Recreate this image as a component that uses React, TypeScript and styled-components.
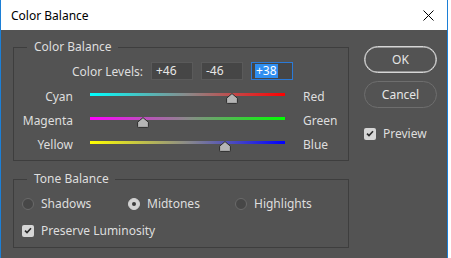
import styled, { createGlobalStyle } from "styled-components";

const GlobalStyle = createGlobalStyle`
  html, body {
    margin: 0;
    padding: 0;
    background: #ffffff;
  }
  body {
    font-family: "Noto Sans", "DejaVu Sans", sans-serif;
    font-size: 12px;
  }
`;

const Window = styled.div`
  width: 448px;
  height: 258px;
  box-sizing: border-box;
  border-left: 1px solid #1c7fd6;
  border-right: 1px solid #1c7fd6;
  background: #535353;
  display: flex;
  flex-direction: column;
`;

const TitleBar = styled.div`
  height: 30px;
  background: #ffffff;
  display: flex;
  align-items: center;
  justify-content: space-between;
  padding: 0 9px 0 10px;
  color: #000000;
  font-size: 12px;
`;

const CloseButton = styled.div`
  width: 12px;
  height: 12px;
  display: flex;
  align-items: center;
  justify-content: center;
  margin-right: 4px;
`;

const Body = styled.div`
  display: flex;
  align-items: flex-start;
  padding: 17px 0 0 12px;
  color: #dedede;
`;

const LeftColumn = styled.div`
  width: 336px;
  display: flex;
  flex-direction: column;
  gap: 18px;
`;

const RightColumn = styled.div`
  width: 73px;
  margin-left: 15px;
  margin-top: -1px;
  display: flex;
  flex-direction: column;
`;

const Group = styled.div<{ $height: number }>`
  position: relative;
  box-sizing: border-box;
  height: ${(p) => p.$height}px;
  border: 1px solid #3e3e3e;
`;

const Legend = styled.span`
  position: absolute;
  top: -9px;
  left: 13px;
  padding: 0 6px 0 7px;
  background: #535353;
  line-height: 16px;
  color: #dedede;
`;

const LevelsRow = styled.div`
  display: flex;
  align-items: center;
  gap: 8px;
  margin-top: 14px;
  height: 18px;
`;

const LevelsLabel = styled.span`
  width: 129px;
  text-align: right;
`;

const Field = styled.div<{ $active?: boolean }>`
  box-sizing: border-box;
  width: 42px;
  height: 18px;
  background: #464646;
  border: 1px solid ${(p) => (p.$active ? "#2a7ad8" : "#5a5a5a")};
  padding-left: ${(p) => (p.$active ? "3px" : "4px")};
  display: flex;
  align-items: center;
  color: #e6e6e6;
  line-height: 14px;
`;

const Selection = styled.span`
  background: #2f8ef0;
  color: #ffffff;
  padding: 0 1px;
`;

const Sliders = styled.div`
  margin-top: 9px;
`;

const SliderRow = styled.div`
  display: grid;
  grid-template-columns: 59px 195px auto;
  column-gap: 17px;
  height: 24px;
  align-items: start;
`;

const LeftLabel = styled.span`
  text-align: right;
  line-height: 16px;
  white-space: nowrap;
  direction: rtl;
`;

const RightLabel = styled.span`
  line-height: 16px;
  margin-left: 1px;
`;

const Track = styled.div<{ $from: string; $to: string }>`
  position: relative;
  height: 3px;
  margin-top: 4px;
  background: linear-gradient(
    90deg,
    ${(p) => p.$from} 0%,
    #8a8a8a 50%,
    ${(p) => p.$to} 100%
  );
`;

const Thumb = styled.svg`
  position: absolute;
  top: 0;
  width: 12px;
  height: 11px;
  margin-left: -6px;
`;

const ToneRow = styled.div`
  display: grid;
  grid-template-columns: 106px 107px auto;
  align-items: center;
  margin: 15px 0 0 8px;
  height: 14px;
`;

const Option = styled.label`
  display: flex;
  align-items: center;
  gap: 7px;
`;

const Radio = styled.span<{ $checked?: boolean }>`
  box-sizing: border-box;
  width: 12px;
  height: 12px;
  border-radius: 50%;
  border: 1px solid ${(p) => (p.$checked ? "#d2d2d2" : "#6a6a6a")};
  background: ${(p) => (p.$checked ? "#d2d2d2" : "#474747")};
  display: flex;
  align-items: center;
  justify-content: center;
  &::after {
    content: "";
    display: ${(p) => (p.$checked ? "block" : "none")};
    width: 4px;
    height: 4px;
    border-radius: 50%;
    background: #3a3a3a;
  }
`;

const Check = styled.span`
  box-sizing: border-box;
  width: 12px;
  height: 12px;
  border-radius: 2px;
  background: #d6d6d6;
  display: flex;
  align-items: center;
  justify-content: center;
`;

const CheckRow = styled(Option)`
  margin: 13px 0 0 8px;
`;

const Button = styled.div<{ $primary?: boolean }>`
  box-sizing: border-box;
  height: 27px;
  border-radius: 14px;
  border: 1px solid ${(p) => (p.$primary ? "#d6d6d6" : "#6e6e6e")};
  box-shadow: ${(p) => (p.$primary ? "inset 0 0 0 0.5px #d6d6d6" : "none")};
  display: flex;
  align-items: center;
  justify-content: center;
  color: #e6e6e6;
  font-size: 12px;
  & + & {
    margin-top: 8px;
  }
`;

const PreviewRow = styled(Option)`
  margin-top: 17px;
`;

const CheckMark = () => (
  <svg width="8" height="7" viewBox="0 0 8 7">
    <path d="M1 3.6 L3 5.6 L7 1.2" stroke="#2a2a2a" strokeWidth="1.6" fill="none" />
  </svg>
);

interface SliderProps {
  left: string;
  right: string;
  from: string;
  to: string;
  value: number;
}

const Slider = ({ left, right, from, to, value }: SliderProps) => (
  <SliderRow>
    <LeftLabel>{left}</LeftLabel>
    <Track $from={from} $to={to}>
      <Thumb viewBox="0 0 12 11" style={{ left: `${50 + value / 2}%` }}>
        <path
          d="M6 0.6 L11.4 5.2 L11.4 9.6 Q11.4 10.4 10.6 10.4 L1.4 10.4 Q0.6 10.4 0.6 9.6 L0.6 5.2 Z"
          fill="#b5b5b5"
          stroke="#2c2c2c"
          strokeWidth="1"
        />
      </Thumb>
    </Track>
    <RightLabel>{right}</RightLabel>
  </SliderRow>
);

export default function App() {
  return (
    <>
      <GlobalStyle />
      <Window>
        <TitleBar>
          <span>Color Balance</span>
          <CloseButton>
            <svg width="11" height="11" viewBox="0 0 11 11">
              <path d="M0.5 0.5 L10.5 10.5 M10.5 0.5 L0.5 10.5" stroke="#000" strokeWidth="1" />
            </svg>
          </CloseButton>
        </TitleBar>
        <Body>
          <LeftColumn>
            <Group $height={114}>
              <Legend>Color Balance</Legend>
              <LevelsRow>
                <LevelsLabel>Color Levels:</LevelsLabel>
                <Field>+46</Field>
                <Field>-46</Field>
                <Field $active>
                  <Selection>+38</Selection>
                </Field>
              </LevelsRow>
              <Sliders>
                <Slider left="Cyan" right="Red" from="#00ffff" to="#ff0000" value={46} />
                <Slider left="Magenta" right="Green" from="#ff00ff" to="#00ff00" value={-46} />
                <Slider left="Yellow" right="Blue" from="#ffff00" to="#0000ff" value={38} />
              </Sliders>
            </Group>
            <Group $height={69}>
              <Legend>Tone Balance</Legend>
              <ToneRow>
                <Option>
                  <Radio />
                  Shadows
                </Option>
                <Option>
                  <Radio $checked />
                  Midtones
                </Option>
                <Option>
                  <Radio />
                  Highlights
                </Option>
              </ToneRow>
              <CheckRow>
                <Check>
                  <CheckMark />
                </Check>
                Preserve Luminosity
              </CheckRow>
            </Group>
          </LeftColumn>
          <RightColumn>
            <Button $primary>OK</Button>
            <Button>Cancel</Button>
            <PreviewRow>
              <Check>
                <CheckMark />
              </Check>
              Preview
            </PreviewRow>
          </RightColumn>
        </Body>
      </Window>
    </>
  );
}
